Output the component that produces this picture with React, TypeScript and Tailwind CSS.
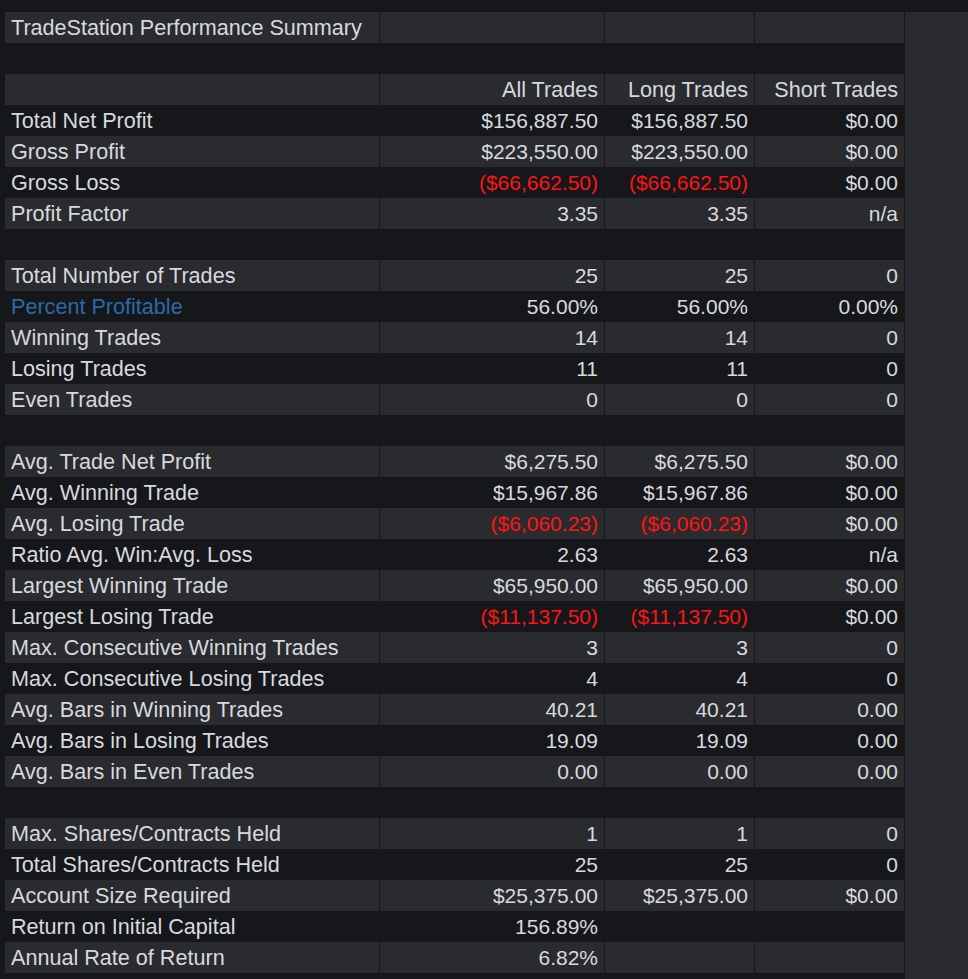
type Cell = string | { v: string; red?: boolean };

type Row = {
  label: string;
  blue?: boolean;
  head?: boolean;
  cells?: Cell[];
};

const r = (v: string): Cell => ({ v, red: true });

const rows: Row[] = [
  { label: "TradeStation Performance Summary", cells: ["", "", ""] },
  { label: "" },
  { label: "", head: true, cells: ["All Trades", "Long Trades", "Short Trades"] },
  { label: "Total Net Profit", cells: ["$156,887.50", "$156,887.50", "$0.00"] },
  { label: "Gross Profit", cells: ["$223,550.00", "$223,550.00", "$0.00"] },
  { label: "Gross Loss", cells: [r("($66,662.50)"), r("($66,662.50)"), "$0.00"] },
  { label: "Profit Factor", cells: ["3.35", "3.35", "n/a"] },
  { label: "" },
  { label: "Total Number of Trades", cells: ["25", "25", "0"] },
  { label: "Percent Profitable", blue: true, cells: ["56.00%", "56.00%", "0.00%"] },
  { label: "Winning Trades", cells: ["14", "14", "0"] },
  { label: "Losing Trades", cells: ["11", "11", "0"] },
  { label: "Even Trades", cells: ["0", "0", "0"] },
  { label: "" },
  { label: "Avg. Trade Net Profit", cells: ["$6,275.50", "$6,275.50", "$0.00"] },
  { label: "Avg. Winning Trade", cells: ["$15,967.86", "$15,967.86", "$0.00"] },
  { label: "Avg. Losing Trade", cells: [r("($6,060.23)"), r("($6,060.23)"), "$0.00"] },
  { label: "Ratio Avg. Win:Avg. Loss", cells: ["2.63", "2.63", "n/a"] },
  { label: "Largest Winning Trade", cells: ["$65,950.00", "$65,950.00", "$0.00"] },
  { label: "Largest Losing Trade", cells: [r("($11,137.50)"), r("($11,137.50)"), "$0.00"] },
  { label: "Max. Consecutive Winning Trades", cells: ["3", "3", "0"] },
  { label: "Max. Consecutive Losing Trades", cells: ["4", "4", "0"] },
  { label: "Avg. Bars in Winning Trades", cells: ["40.21", "40.21", "0.00"] },
  { label: "Avg. Bars in Losing Trades", cells: ["19.09", "19.09", "0.00"] },
  { label: "Avg. Bars in Even Trades", cells: ["0.00", "0.00", "0.00"] },
  { label: "" },
  { label: "Max. Shares/Contracts Held", cells: ["1", "1", "0"] },
  { label: "Total Shares/Contracts Held", cells: ["25", "25", "0"] },
  { label: "Account Size Required", cells: ["$25,375.00", "$25,375.00", "$0.00"] },
  { label: "Return on Initial Capital", cells: ["156.89%", "", ""] },
  { label: "Annual Rate of Return", cells: ["6.82%", "", ""] },
];

const TableRow = ({ row, light }: { row: Row; light: boolean }) => {
  const bg = light ? "bg-[#2a2b2f]" : "bg-[#16171b]";
  if (!row.cells) {
    return <div className={`col-span-4 h-[31px] ${bg}`} />;
  }
  return (
    <>
      <div
        className={`h-[31px] flex items-center pl-[6px] pt-[2px] border-r border-[#16171b] whitespace-nowrap text-[21.6px] ${bg} ${
          row.blue ? "text-[#2c6aa6]" : "text-[#d6dadf]"
        }`}
      >
        {row.label}
      </div>
      {row.cells.map((c, i) => {
        const val = typeof c === "string" ? c : c.v;
        const red = typeof c !== "string" && c.red;
        return (
          <div
            key={i}
            className={`h-[31px] flex items-center justify-end pr-[6px] border-r border-[#16171b] whitespace-nowrap ${bg} ${
              row.head ? "text-[21.6px] pt-[2px]" : "text-[21px]"
            } ${red ? "text-[#ff1414]" : "text-[#d6dadf]"}`}
          >
            {val}
          </div>
        );
      })}
    </>
  );
};

export default function App() {
  return (
    <div
      className="w-[968px] h-[979px] bg-[#16171b] flex flex-col overflow-hidden"
      style={{ fontFamily: '"Liberation Sans", Arial, sans-serif' }}
    >
      <div className="h-[12px] shrink-0" />
      <div className="flex flex-1">
        <div className="pl-[5px]">
          <div className="grid grid-cols-[375px_225px_150px_150px]">
            {rows.map((row, i) => (
              <TableRow key={i} row={row} light={i % 2 === 0} />
            ))}
          </div>
        </div>
        <div className="flex-1 bg-[#2a2b2f]" />
      </div>
    </div>
  );
}
